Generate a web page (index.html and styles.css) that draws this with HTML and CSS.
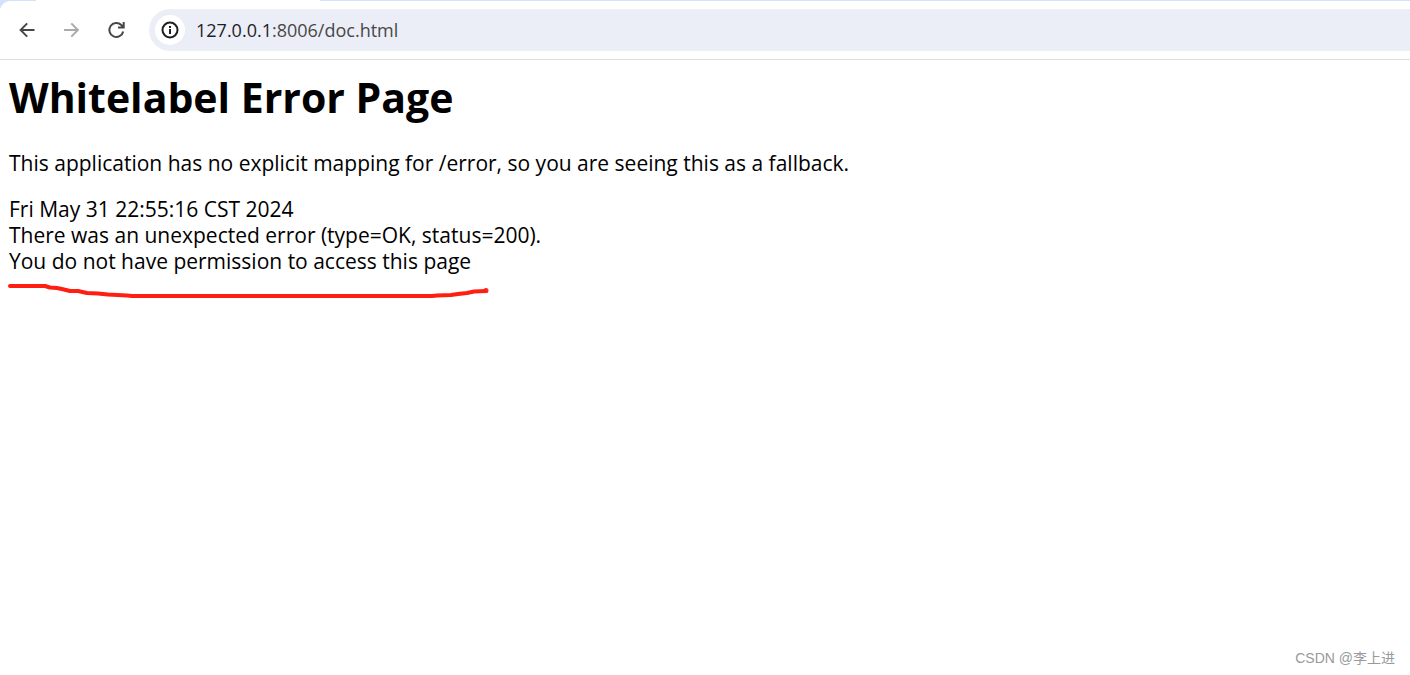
FILE: index.html
```
<!DOCTYPE html>
<html lang="en">
<head>
<meta charset="utf-8">
<title>Whitelabel Error Page</title>
<link rel="stylesheet" href="styles.css">
</head>
<body>
<header class="browser">
  <div class="tab-strip"><div class="active-tab"></div></div>
  <div class="toolbar">
    <nav class="nav-buttons" aria-label="Browser navigation">
      <button class="nav-button" type="button" aria-label="Back">
        <svg width="20" height="20" viewBox="0 0 20 20"><path d="M17.500 10H4M10.200 3.400 3.600 10l6.600 6.600"/></svg>
      </button>
      <button class="nav-button nav-button-off" type="button" aria-label="Forward" disabled>
        <svg width="20" height="20" viewBox="0 0 20 20"><path d="M2 10H15.500M9.300 3.400 15.900 10l-6.600 6.600"/></svg>
      </button>
      <button class="nav-button" type="button" aria-label="Reload">
        <svg width="20" height="20" viewBox="0 0 20 20"><path d="M16.200 11.500A7 7 0 1 1 14.300 5L16.500 7.200M16.700 2V7.500H11"/></svg>
      </button>
    </nav>
    <div class="address-bar">
      <button class="site-info" type="button" aria-label="View site information">
        <svg width="20" height="20" viewBox="0 0 20 20"><circle cx="10" cy="10" r="7.500"/><path d="M10 9v5M10 6v2"/></svg>
      </button>
      <div class="address" role="textbox" aria-label="Address" contenteditable="true" spellcheck="false"><span class="host">127.0.0.1</span>:8006/doc.html</div>
    </div>
  </div>
</header>
<main class="page">
  <h1 class="title">Whitelabel Error Page</h1>
  <p class="message">This application has no explicit mapping for /error, so you are seeing this as a fallback.</p>
  <div class="details">
    <div>Fri May 31 22:55:16 CST 2024</div>
    <div>There was an unexpected error (type=OK, status=200).</div>
    <div>You do not have permission to access this page</div>
  </div>
  <svg class="marker" width="490" height="20" viewBox="0 0 490 20" aria-hidden="true"><path d="M10 6H45L50 7.500 57 8 64 9.500 70 11H78L87 13 98 13.500 108 14.500 127 15.500 132 16H432L437 15.500 451 15 458 14 467 13 474 11.500 486 11"/><circle cx="486" cy="10.500" r="0.500"/></svg>
</main>
<footer class="watermark">CSDN @李上进</footer>
</body>
</html>
```
FILE: styles.css
```
* {
  box-sizing: border-box;
}

body {
  display: flex;
  flex-direction: column;
  min-height: 100vh;
  margin: 0;
  background: #fff;
  color: #000;
  font-family: "Open Sans", "Noto Sans CJK SC", sans-serif;
}

.browser {
  border-bottom: 1px solid #dfdfe1;
  background: linear-gradient(#d3e3fd 8px, #fff 8px);
}

.tab-strip {
  height: 1px;
}

.active-tab {
  width: 284px;
  height: 1px;
  margin-left: 36px;
  background: #fff;
}

.toolbar {
  display: flex;
  align-items: center;
  gap: 20px;
  padding: 8px 0 8px 14px;
  border-top-left-radius: 10px;
  background: #fff;
}

.nav-buttons {
  display: flex;
  gap: 20px;
}

.nav-button,
.site-info {
  display: flex;
  align-items: center;
  justify-content: center;
  padding: 0;
  border: 0;
  background: none;
}

.nav-button {
  width: 25px;
  height: 30px;
}

.nav-button svg,
.site-info svg {
  fill: none;
  stroke: #474747;
  stroke-width: 2;
}

.nav-button-off svg {
  stroke: #ababab;
}

.address-bar {
  display: flex;
  flex: 1;
  align-items: center;
  gap: 11px;
  height: 42px;
  padding-left: 6px;
  border-radius: 21px 0 0 21px;
  background: #ebeef7;
}

.site-info {
  width: 30px;
  height: 30px;
  border-radius: 50%;
  background: #fff;
}

.site-info svg {
  stroke: #1f1f1f;
}

.address {
  flex: 1;
  color: #474747;
  font-size: 18px;
  line-height: 26px;
}

.host {
  color: #1f1f1f;
}

.page {
  flex: 1;
  padding: 8px 9px;
  font-size: 21px;
  line-height: 26px;
}

.title {
  margin: 0 0 24px;
  font-size: 41px;
  line-height: 58px;
}

.message {
  margin: 0 0 20px;
}

.marker {
  display: block;
  margin: 6px 0 0 -9px;
  fill: none;
  stroke: #ff1e10;
  stroke-width: 4;
  stroke-linecap: round;
  stroke-linejoin: round;
}

.watermark {
  padding: 0 15px 7px;
  color: #999;
  font-family: "Liberation Sans", "Noto Sans CJK SC", sans-serif;
  font-size: 14px;
  line-height: 20px;
  text-align: right;
}
```
